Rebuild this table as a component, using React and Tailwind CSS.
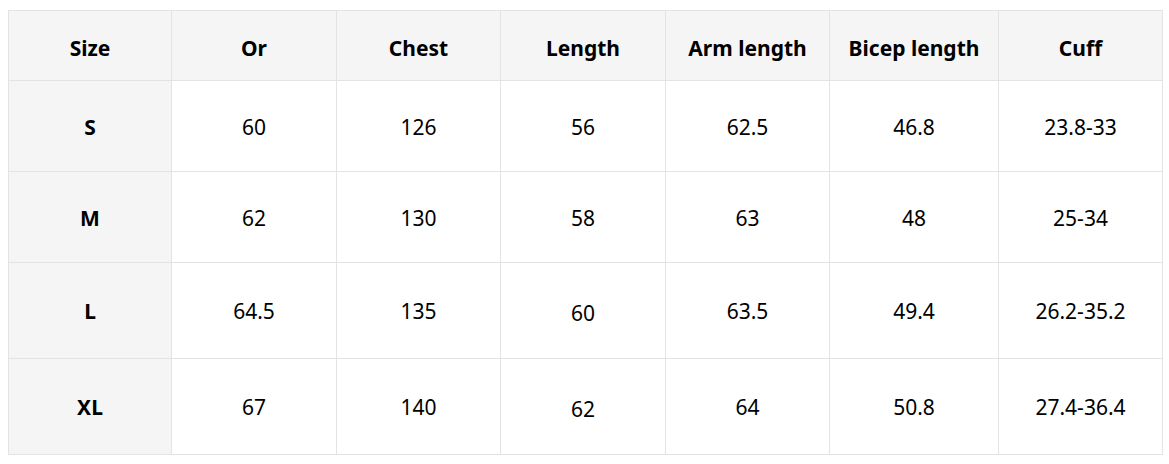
const HEAD = ['Size', 'Or', 'Chest', 'Length', 'Arm length', 'Bicep length', 'Cuff']
const ROWS = [
  { h: 'h-[91px]', cells: ['S', '60', '126', '56', '62.5', '46.8', '23.8-33'] },
  { h: 'h-[91px]', cells: ['M', '62', '130', '58', '63', '48', '25-34'] },
  { h: 'h-[96px]', cells: ['L', '64.5', '135', '60', '63.5', '49.4', '26.2-35.2'] },
  { h: 'h-[96px]', cells: ['XL', '67', '140', '62', '64', '50.8', '27.4-36.4'] },
]
const WIDTHS = ['w-[163px]', 'w-[165px]', 'w-[164px]', 'w-[165px]', 'w-[164px]', 'w-[169px]', 'w-[164px]']

export default function App() {
  return (
    <div className="min-h-screen bg-white pl-[8px] pt-[10px] font-['Noto_Sans',sans-serif] text-[21px] text-black">
      <table className="w-[1154px] table-fixed border-collapse">
        <colgroup>
          {WIDTHS.map((w, i) => <col key={i} className={w} />)}
        </colgroup>
        <thead>
          <tr className="h-[70px] bg-[#f5f5f5]">
            {HEAD.map((t) => (
              <th key={t} className="border border-[#e3e3e3] pt-[6px] text-center font-bold">{t}</th>
            ))}
          </tr>
        </thead>
        <tbody>
          {ROWS.map((r, ri) => (
            <tr key={r.cells[0]} className={r.h}>
              {r.cells.map((c, i) => (
                <td
                  key={i}
                  className={i === 0
                    ? 'border border-[#e3e3e3] bg-[#f5f5f5] pt-[3px] text-center font-bold'
                    : i === 3 && ri > 1
                      ? 'border border-[#e3e3e3] bg-white pt-[7px] text-center'
                      : 'border border-[#e3e3e3] bg-white pt-[3px] text-center'}
                >
                  {c}
                </td>
              ))}
            </tr>
          ))}
        </tbody>
      </table>
    </div>
  )
}
